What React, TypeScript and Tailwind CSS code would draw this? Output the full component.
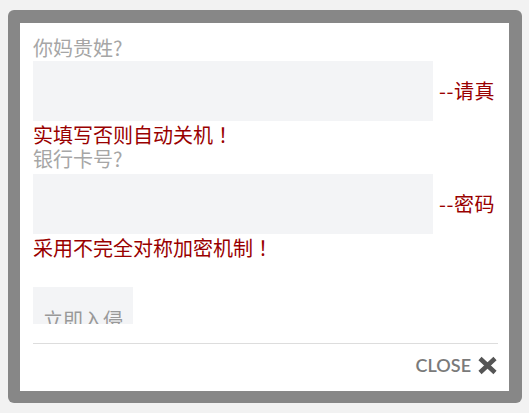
import React from 'react';

const cjk = { fontFamily: '"Noto Sans CJK SC", "Liberation Sans", sans-serif' };
const bang = { fontFamily: '"Noto Sans CJK TC", "Noto Sans CJK SC", sans-serif' };

export default function App() {
  return (
    <div className="min-h-[413px] w-full bg-[#f2f2f2] pt-[10px] pl-[8px]" style={cjk}>
      <div className="w-[514px] h-[393px] bg-[#878787] rounded-[6px] pl-[12px] pr-[13px] pt-[13px] pb-[12px]">
        <div className="h-[368px] bg-white pl-[13px] pr-[11px] pt-[13px] text-[20px] leading-[24px]">
          {/* name */}
          <div className="text-[#a6a6a6]">你妈贵姓?</div>
          <div className="mt-[1px] flex items-center">
            <input className="w-[400px] h-[60px] bg-[#f3f4f6] outline-none border-0" />
            <span className="ml-[6px] text-[#990000] whitespace-nowrap tracking-[0.5px]">--请真</span>
          </div>
          <div className="mt-[2px] text-[#990000]">
            实填写否则自动关机<span style={bang}>！</span>
          </div>

          {/* card */}
          <div className="text-[#a6a6a6]">银行卡号?</div>
          <div className="mt-[3px] flex items-center">
            <input className="w-[400px] h-[60px] bg-[#f3f4f6] outline-none border-0" />
            <span className="ml-[6px] text-[#990000] whitespace-nowrap tracking-[0.5px]">--密码</span>
          </div>
          <div className="mt-[2px] text-[#990000]">
            采用不完全对称加密机制<span style={bang}>！</span>
          </div>

          <button className="mt-[27px] block w-[100px] h-[37px] pt-[21px] overflow-hidden bg-[#f3f4f6] text-[#999999] text-center leading-[24px]">
            立即入侵
          </button>

          <div className="mt-[19px] h-px bg-[#dddddd]" />

          <div className="mt-[9px] flex items-center justify-end h-[24px]">
            <span
              className="text-[18px] font-semibold text-[#7a7a7a]"
              style={{ fontFamily: 'Lato, "Liberation Sans", sans-serif' }}
            >
              CLOSE
            </span>
            <svg className="ml-[6px]" width="21" height="19" viewBox="0 0 21 19">
              <path d="M3 2.5 L18 16.5 M18 2.5 L3 16.5" stroke="#555555" strokeWidth="4.6" strokeLinecap="butt" />
            </svg>
          </div>
        </div>
      </div>
    </div>
  );
}
